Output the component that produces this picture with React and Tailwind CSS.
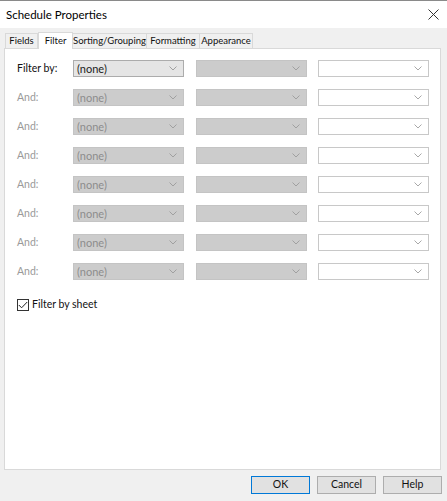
import React from 'react';

const font = { fontFamily: 'Lato, "Open Sans", "Liberation Sans", sans-serif' };

const Chevron = ({ color = '#9a9a9a' }) => (
  <svg width="8" height="5" viewBox="0 0 8 5" className="shrink-0">
    <path d="M0.5 0.5 L4 4 L7.5 0.5" fill="none" stroke={color} strokeWidth="1" />
  </svg>
);

const Combo = ({ variant, text }) => {
  const styles = {
    active: 'bg-[#e5e5e5] border-[#acacac] text-[#222]',
    disabled: 'bg-[#cccccc] border-[#c4c4c4] text-[#8c8c8c]',
    white: 'bg-white border-[#c8c8c8] text-[#222]',
  };
  return (
    <div className={`h-[17px] border flex items-center justify-between pl-[3px] pr-[6px] ${styles[variant]}`}>
      <span className="text-[11px] leading-none">{text}</span>
      <Chevron color={variant === 'white' ? '#a8a8a8' : '#a0a0a0'} />
    </div>
  );
};

const rows = [
  { label: 'Filter by:', first: true },
  ...Array.from({ length: 7 }, () => ({ label: 'And:' })),
];

const tabs = [
  { name: 'Fields', w: 'w-[33px]' },
  { name: 'Filter', w: 'w-[35px]', active: true },
  { name: 'Sorting/Grouping', w: 'w-[74px]' },
  { name: 'Formatting', w: 'w-[53px]' },
  { name: 'Appearance', w: 'w-[53px]' },
];

export default function App() {
  return (
    <div style={font} className="w-[447px] h-[501px] bg-[#f0f0f0] flex flex-col border-t border-[#8a8a8a] overflow-hidden">
      {/* Titelbalk */}
      <div className="h-[27px] bg-white flex items-center justify-between pl-[6px] pr-[8px] shrink-0">
        <span className="text-[11.5px] text-black">Schedule Properties</span>
        <svg width="11" height="11" viewBox="0 0 11 11">
          <path d="M0.5 0.5 L10.5 10.5 M10.5 0.5 L0.5 10.5" stroke="#333" strokeWidth="1" />
        </svg>
      </div>

      {/* Tabs */}
      <div className="flex items-end pl-[5px] pt-[3px] h-[20px] shrink-0 text-[9.5px] text-[#111] whitespace-nowrap">
        {tabs.map((t, i) =>
          t.active ? (
            <div key={t.name} className={`h-[17px] ${t.w} border border-b-0 border-[#d9d9d9] bg-white flex items-start justify-center pt-[1px] -mb-px relative z-10`}>{t.name}</div>
          ) : (
            <div key={t.name} className={`h-[15px] ${t.w} border border-b-0 ${i > 1 ? 'border-l-0' : ''} border-[#d9d9d9] bg-[#f0f0f0] flex items-center justify-center`}>{t.name}</div>
          )
        )}
      </div>

      {/* Panel */}
      <div className="ml-[4px] w-[437px] h-[422px] bg-white border border-[#d9d9d9] shrink-0 pt-[11px]">
        <div className="flex flex-col gap-[12px]">
          {rows.map((r, i) => (
            <div key={i} className="flex items-center h-[17px]">
              <span className={`w-[68px] pl-[12px] text-[10.5px] ${r.first ? 'text-[#111]' : 'text-[#9a9a9a]'}`}>{r.label}</span>
              <div className="w-[111px]">
                <Combo variant={r.first ? 'active' : 'disabled'} text="(none)" />
              </div>
              <div className="w-[111px] ml-[12px]">
                <Combo variant="disabled" text="" />
              </div>
              <div className="w-[111px] ml-[11px]">
                <Combo variant="white" text="" />
              </div>
            </div>
          ))}
        </div>
        <div className="flex items-center mt-[17px] pl-[12px] gap-[3px]">
          <div className="w-[12px] h-[12px] border border-[#333] bg-white flex items-center justify-center">
            <svg width="10" height="8" viewBox="0 0 10 8">
              <path d="M0.8 4 L3.6 6.8 L9.2 1" fill="none" stroke="#222" strokeWidth="1" />
            </svg>
          </div>
          <span className="text-[10.5px] text-[#111]">Filter by sheet</span>
        </div>
      </div>

      {/* Knoppen */}
      <div className="flex justify-end gap-[7px] pr-[5px] mt-[6px] text-[10.5px] text-[#111]">
        <button className="w-[59px] h-[18px] bg-[#e1e1e1] border border-[#0078d7] flex items-center justify-center">OK</button>
        <button className="w-[59px] h-[18px] bg-[#e1e1e1] border border-[#adadad] flex items-center justify-center">Cancel</button>
        <button className="w-[59px] h-[18px] bg-[#e1e1e1] border border-[#adadad] flex items-center justify-center">Help</button>
      </div>
    </div>
  );
}
